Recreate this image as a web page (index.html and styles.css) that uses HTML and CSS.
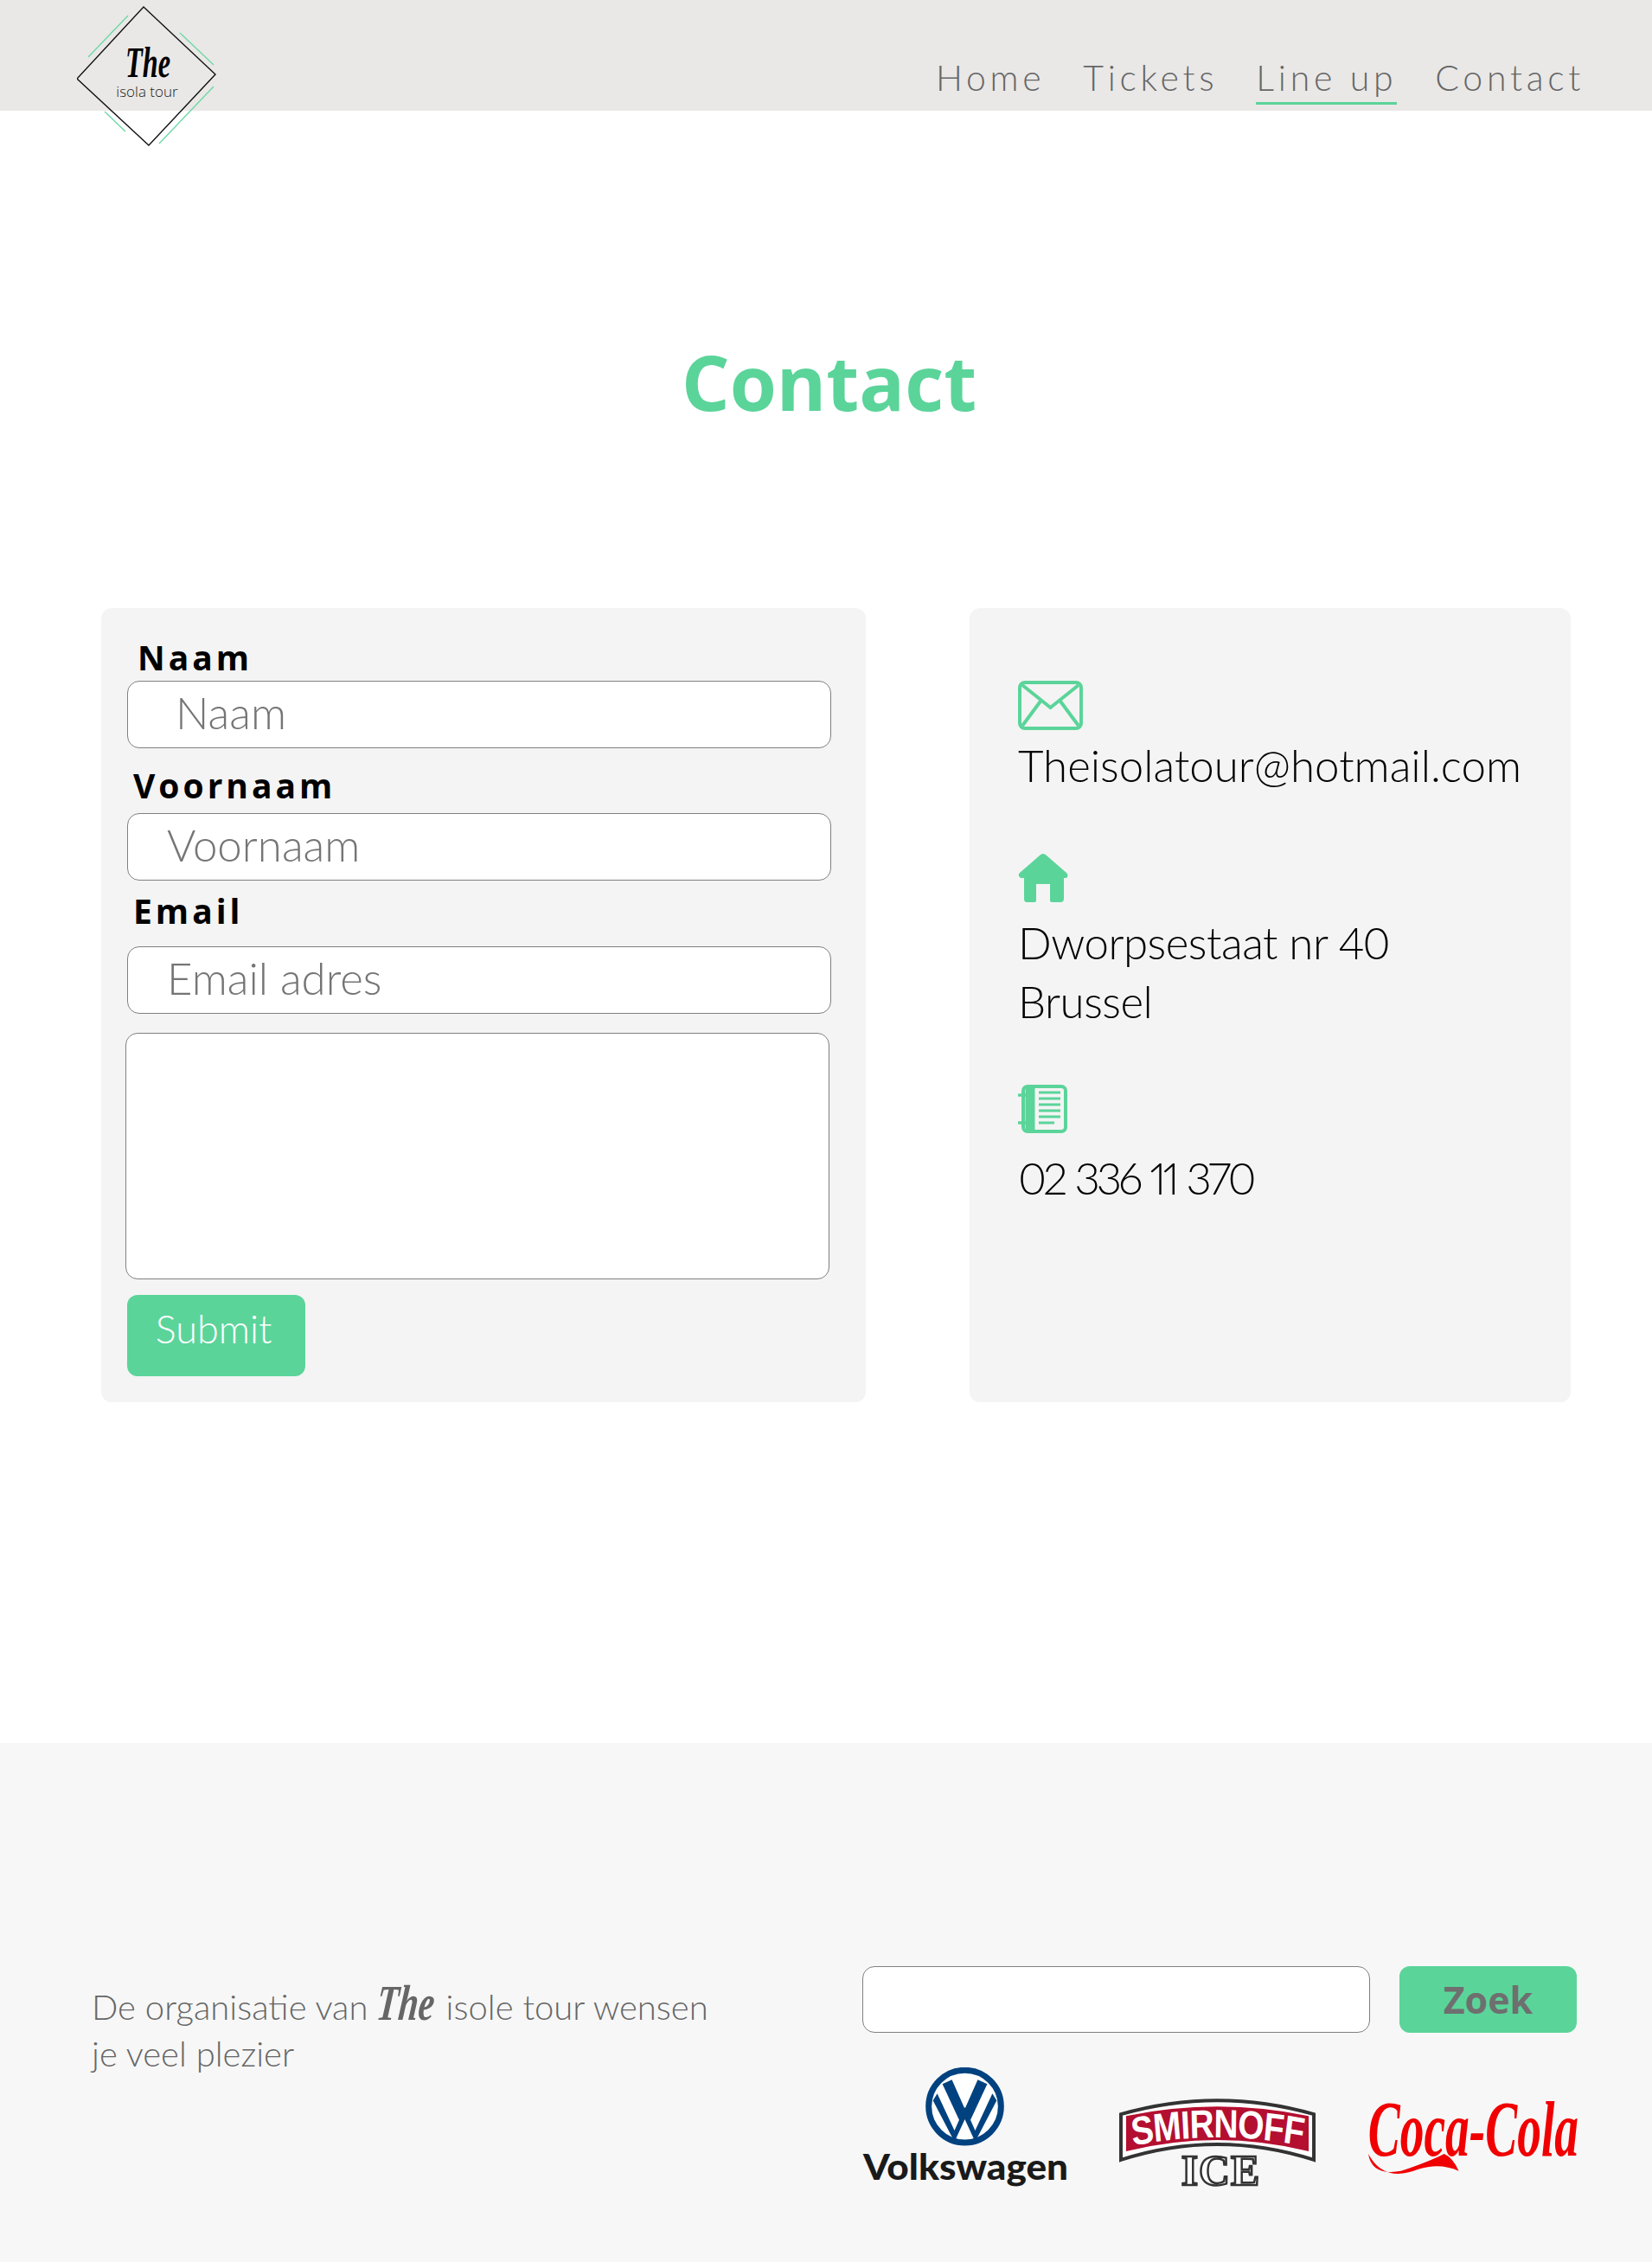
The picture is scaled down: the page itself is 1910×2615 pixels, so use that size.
FILE: index.html
```html
<!DOCTYPE html>
<html lang="en">
<head>
  <meta charset="UTF-8">
  <meta name="viewport" content="width=device-width, initial-scale=1.0">
  <title>Contact</title>
  <link rel="stylesheet" href="styles.css">
</head>
<body>
  <header class="site-header">
    <!-- logo hangs over the edge of the header -->
    <svg class="logo" width="170" height="175" viewBox="0 0 170 175">
      <path d="M77 8 160 86 83 168 0 91Z" fill="none" stroke="#111" stroke-width="1.400"/>
      <path d="M13 66 59 18M119 38 158 75M158 100 95 166M32 129 56 152" fill="none" stroke="#6fd9a8" stroke-width="1.400"/>
      <text class="logo-the" x="82" y="89" text-anchor="middle" textLength="52" lengthAdjust="spacingAndGlyphs">The</text>
      <text class="logo-sub" x="81" y="112" text-anchor="middle">isola tour</text>
    </svg>
    <nav class="nav">
      <a href="#">Home</a>
      <a href="#">Tickets</a>
      <a href="#" class="active">Line up</a>
      <a href="#">Contact</a>
    </nav>
  </header>

  <main class="content">
    <h1 class="title">Contact</h1>
    <div class="cards">
      <form class="card form-card">
        <label class="label label-naam" for="naam">Naam</label>
        <input class="field field-naam" id="naam" type="text" placeholder="Naam">
        <label class="label label-voornaam" for="voornaam">Voornaam</label>
        <input class="field" id="voornaam" type="text" placeholder="Voornaam">
        <label class="label label-email" for="email">Email</label>
        <input class="field" id="email" type="text" placeholder="Email adres">
        <textarea class="message"></textarea>
        <button class="submit" type="button">Submit</button>
      </form>

      <div class="card info-card">
        <div class="info info-mail">
          <svg width="75" height="57" viewBox="0 0 75 57" fill="none" stroke="#5bd49a" stroke-width="4">
            <rect x="2" y="2" width="71" height="53" rx="6"/>
            <path d="M5 5 37.500 31 70 5M28 21 5 52M47 21 70 52"/>
          </svg>
          <p>Theisolatour@hotmail.com</p>
        </div>
        <div class="info info-home">
          <svg width="58" height="56" viewBox="0 0 58 56" fill="#5bd49a">
            <path d="M29 0Q31 0 33 2L56 22Q59 25 56 28H53V52Q53 56 49 56H39Q37 56 37 54V35H21V54Q21 56 19 56H10Q7 56 7 52V28H3Q-1 25 2 22L25 2Q27 0 29 0Z"/>
          </svg>
          <p class="address">Dworpsestaat nr 40<br>Brussel</p>
        </div>
        <div class="info info-phone">
          <svg width="57" height="56" viewBox="0 0 57 56" fill="none" stroke="#5bd49a">
            <rect x="6" y="2" width="49" height="52" rx="5" stroke-width="4"/>
            <path d="M14 2V54" stroke-width="11"/>
            <path d="M1 12H11M1 44H11" stroke-width="3.500" stroke-linecap="round"/>
            <path d="M24 9H49M24 16H49M24 23H49M24 30H49M24 37H49M24 44H42" stroke-width="3"/>
          </svg>
          <p class="phone">02 336 11 370</p>
        </div>
      </div>
    </div>
  </main>

  <footer class="site-footer">
    <p class="footer-text">De organisatie van <span class="the">The</span> isole tour wensen<br>je veel plezier</p>
    <div class="footer-right">
      <div class="search">
        <input class="search-input" type="text">
        <button class="search-btn" type="button">Zoek</button>
      </div>
      <div class="sponsors">
        <svg class="vw" width="240" height="145" viewBox="0 0 240 145">
          <circle cx="119" cy="45" r="42" fill="#fff" stroke="#00427f" stroke-width="7"/>
          <path d="M93 19 113 62 119 48 125 62 145 19 134 14 119 48 104 14ZM82 38 107 86 119 60 131 86 156 38 151 30 131 73 119 46 107 73 87 30Z" fill="#00427f"/>
          <text class="vw-name" x="120" y="130" text-anchor="middle" textLength="238" lengthAdjust="spacingAndGlyphs">Volkswagen</text>
        </svg>
        <svg class="smirnoff" width="230" height="116" viewBox="0 0 230 116">
          <path d="M2 19Q114 -13 226 19V72Q114 36 2 72Z" fill="#fff" stroke="#333" stroke-width="4"/>
          <path d="M8 21Q114 -1 220 21V62Q114 36 8 62Z" fill="#b40f30"/>
          <g transform="translate(114 0) scale(.85 1) translate(-114 0)">
            <path id="smirnoff-arc" d="M-4 56Q114 36 232 56" fill="none"/>
            <text class="smirnoff-name"><textPath href="#smirnoff-arc" startOffset="50%" text-anchor="middle">SMIRNOFF</textPath></text>
          </g>
          <text class="smirnoff-ice" x="118" y="101" text-anchor="middle">ICE</text>
        </svg>
        <svg class="coke" width="248" height="124" viewBox="0 0 248 124">
          <g transform="scale(.605 1)">
            <text class="coke-name" x="3" y="88">Coca-Cola</text>
          </g>
          <path d="M2 86Q6 112 40 106 75 94 90 86 100 90 107 106 85 96 60 104 20 120 2 86Z" fill="#f00000"/>
        </svg>
      </div>
    </div>
  </footer>
</body>
</html>
```

FILE: styles.css
```css
body {
  margin: 0;
  padding: 0;
  background-color: #fff;
  font-family: "Lato", "Noto Sans", sans-serif;
  font-weight: 300;
}
.site-header {
  position: relative;
  height: 128px;
  background-color: #e9e8e6;
  display: flex;
  justify-content: flex-end;
  box-sizing: border-box;
  padding: 64px 78px 0 0;
}
.logo {
  position: absolute;
  left: 89px;
  top: 0;
}
.logo-the {
  font-family: "Liberation Serif", serif;
  font-style: italic;
  font-weight: 700;
  font-size: 50px;
  fill: #000;
}
.logo-sub {
  font-family: "Open Sans", sans-serif;
  font-size: 17px;
  fill: #222;
}
.nav {
  display: flex;
  gap: 44px;
  height: 57px;
}
.nav a {
  color: #666;
  font-size: 41px;
  line-height: 52px;
  letter-spacing: 4.700px;
  text-decoration: none;
  border-bottom: 3px solid transparent;
  box-sizing: border-box;
}
.nav a.active {
  border-bottom-color: #5bd49a;
}
.content {
  height: 1887px;
  box-sizing: border-box;
  padding: 260px 94px 0 117px;
}
.title {
  margin: 0 0 208px;
  font-size: 87.500px;
  line-height: 107px;
  font-weight: 700;
  color: #5bd49a;
  text-align: center;
  font-family: "Open Sans", sans-serif;
  width: 1683px;
}
.cards {
  display: flex;
  gap: 120px;
}
.card {
  background-color: #f4f4f4;
  border-radius: 12px;
  height: 918px;
  box-sizing: border-box;
}
.form-card {
  width: 884px;
  padding: 30px 0 0 30px;
  display: flex;
  flex-direction: column;
  align-items: flex-start;
}
.label {
  font-family: "Open Sans", sans-serif;
  font-weight: 700;
  font-size: 39px;
  line-height: 54px;
  letter-spacing: 4px;
  color: #000;
}
.label-naam {
  margin-left: 12px;
}
.label-voornaam {
  margin: 16px 0 5px 7px;
}
.label-email {
  margin: 8px 0 0 7px;
}
.field {
  width: 814px;
  height: 78px;
  box-sizing: border-box;
  border: 1px solid #808080;
  border-radius: 14px;
  background: #fff;
  padding: 0 0 6px 45px;
  font-family: inherit;
  font-weight: 300;
  font-size: 51px;
}
.field-naam {
  padding-left: 55px;
}
#email {
  margin-top: 14px;
}
.field::placeholder {
  color: #757575;
  opacity: 1;
}
.message {
  display: block;
  width: 814px;
  height: 285px;
  box-sizing: border-box;
  border: 1px solid #808080;
  border-radius: 14px;
  background: #fff;
  margin: 22px 0 0 -2px;
  resize: none;
}
.submit {
  width: 206px;
  height: 94px;
  margin-top: 18px;
  padding: 0 6px 16px 0;
  border: none;
  border-radius: 12px;
  background-color: #5bd49a;
  color: #fff;
  font-family: inherit;
  font-weight: 300;
  font-size: 45px;
}
.info-card {
  width: 695px;
  padding: 84px 0 0 56px;
}
.info svg {
  display: block;
}
.info p {
  margin: 0;
  color: #000;
  font-size: 51px;
  line-height: 68px;
}
.info-mail p {
  margin-top: 7px;
}
.info-home {
  margin-top: 68px;
}
.info .address {
  margin-top: 13px;
  letter-spacing: -0.500px;
}
.info-phone {
  margin-top: 62px;
}
.info .phone {
  margin-top: 18px;
  font-variant-numeric: proportional-nums;
  letter-spacing: -4px;
  word-spacing: 2px;
}
.site-footer {
  height: 600px;
  box-sizing: border-box;
  background-color: #f7f7f7;
  padding: 258px 83px 0 106px;
  display: flex;
  justify-content: space-between;
}
.footer-text {
  margin: 20px 0 0;
  color: #666;
  font-size: 40px;
  line-height: 54px;
}
.the {
  display: inline-block;
  font-family: "Liberation Serif", serif;
  font-style: italic;
  font-weight: 700;
  font-size: 58px;
  line-height: 40px;
  transform: scaleX(0.71) skewX(-8deg);
  transform-origin: left center;
  margin-right: -25px;
}
.footer-right {
  width: 830px;
}
.search {
  display: flex;
  gap: 34px;
}
.search-input {
  width: 587px;
  height: 77px;
  box-sizing: border-box;
  border: 1px solid #808080;
  border-radius: 14px;
  background: #fff;
}
.search-btn {
  width: 205px;
  height: 77px;
  border: none;
  border-radius: 12px;
  background-color: #5bd49a;
  color: #6f6f6f;
  font-family: "Open Sans", sans-serif;
  font-weight: 700;
  font-size: 43px;
  padding: 0;
}
.sponsors {
  display: flex;
  align-items: flex-start;
  margin-top: 40px;
}
.vw-name {
  font-family: "Lato", sans-serif;
  font-weight: 900;
  font-size: 42px;
  fill: #1a1a1a;
}
.smirnoff {
  margin: 35px 0 0 58px;
}
.smirnoff-name {
  font-family: "Liberation Sans", sans-serif;
  font-weight: 700;
  font-size: 46px;
  letter-spacing: -1px;
  fill: #fff;
}
.smirnoff-ice {
  font-family: "Liberation Serif", serif;
  font-weight: 700;
  font-size: 50px;
  letter-spacing: 1px;
  fill: #fff;
  stroke: #333;
  stroke-width: 2.500;
}
.coke {
  margin: 14px 0 0 57px;
}
.coke-name {
  font-family: "Liberation Serif", serif;
  font-style: italic;
  font-weight: 700;
  font-size: 92px;
  fill: #f00000;
}
```
